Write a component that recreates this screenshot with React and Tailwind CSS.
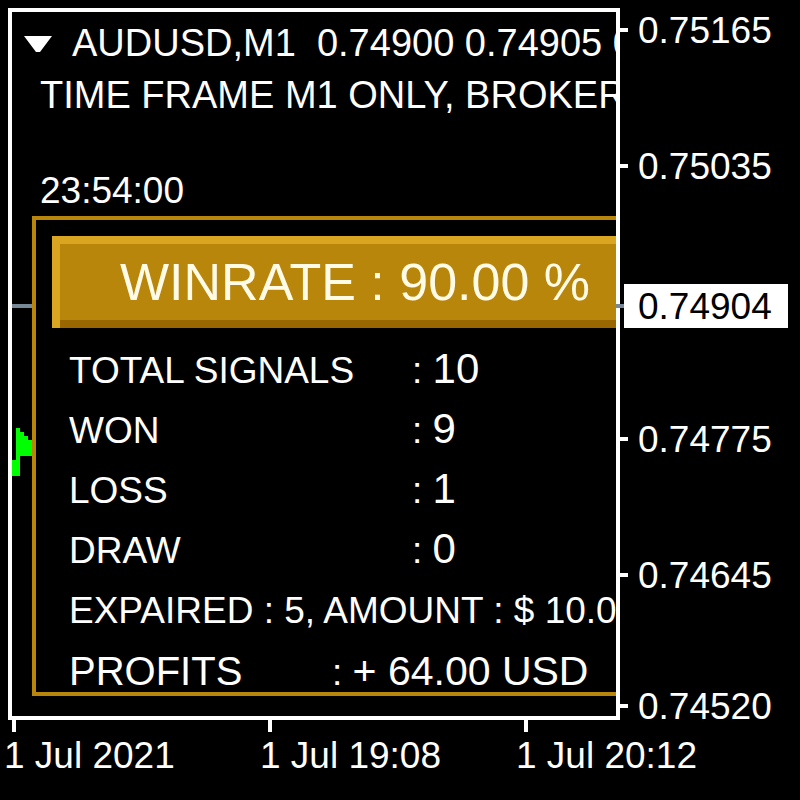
import React from "react";

// price scale: maps a price to its y (px) on the right axis
const TOP_PRICE = 0.75165;
const PX_PER_UNIT = 676 / 0.00645;
const priceY = (p) => 22 + (TOP_PRICE - p) * PX_PER_UNIT;

const priceLabels = ["0.75165", "0.75035", "0.74775", "0.74645", "0.74520"];
const timeLabels = ["1 Jul 2021", "1 Jul 19:08", "1 Jul 20:12"];

function Row({ label, value }) {
  return (
    <div className="h-[60px] leading-[60px] text-[37px] whitespace-nowrap pl-[33px]">
      <span className="inline-block w-[343px]">{label}</span>
      <span>{": "}</span>
      <span className="text-[42px] leading-none">{value}</span>
    </div>
  );
}

export default function App() {
  const cur = 0.74904;
  const curY = Math.round(priceY(cur)) + 2;
  return (
    <div className="w-[800px] h-[800px] bg-black text-white overflow-hidden font-['Liberation_Sans',Arial,sans-serif]">
      <div className="flex pt-[8px] pl-[8px]">
        {/* chart */}
        <div className="relative w-[612px] h-[712px] border-4 border-white overflow-hidden shrink-0">
          <div className="absolute left-0 right-0 h-[4px] bg-[#778899]" style={{ top: curY - 6 }} />
          <svg className="absolute left-0 top-[416px]" width="20" height="48" viewBox="0 0 20 48">
            <polygon
              fill="#00ff00"
              points="4,0 8,0 8,4 12,4 12,8 16,8 16,12 20,12 20,28 8,28 8,48 0,48 0,32 4,32"
            />
          </svg>

          <div className="flex h-[62px] items-start whitespace-nowrap">
            <svg className="mt-[24px] ml-[12px] shrink-0" width="28" height="16" viewBox="0 0 28 16">
              <polygon fill="#ffffff" points="0,0 28,0 16,16 12,16" />
            </svg>
            <span className="ml-[20px] text-[38px] leading-[62px] whitespace-pre">
              {"AUDUSD,M1  0.74900 0.74905 0"}
            </span>
          </div>
          <div className="h-[42px] leading-[42px] text-[38px] pl-[28px] whitespace-nowrap">
            TIME FRAME M1 ONLY, BROKER
          </div>
          <div className="mt-[54px] h-[42px] leading-[42px] text-[37px] pl-[28px] whitespace-nowrap">
            23:54:00
          </div>

          {/* statistics panel */}
          <div className="relative ml-[20px] mt-[4px] w-[700px] h-[480px] border-4 border-[#b8860b] bg-black pt-[16px]">
            <div className="ml-[16px] bg-[#daa520] pt-[8px] pl-[8px]">
              <div className="h-[84px] bg-[#b8860b] border-b-8 border-[#996600] flex items-center pl-[60px] text-[52px] leading-none text-[#fffbe6] whitespace-nowrap">
                WINRATE : 90.00 %
              </div>
            </div>
            <div className="mt-[13px]">
              <Row label="TOTAL SIGNALS" value="10" />
              <Row label="WON" value="9" />
              <Row label="LOSS" value="1" />
              <Row label="DRAW" value="0" />
              <div className="h-[60px] leading-[60px] text-[37px] whitespace-nowrap pl-[33px]">
                EXPAIRED : 5, AMOUNT : $ 10.0
              </div>
              <div className="h-[60px] leading-[60px] text-[37px] whitespace-nowrap pl-[33px]">
                <span className="inline-block w-[263px] text-[40px]">PROFITS</span>
                <span>{": "}</span>
                <span className="text-[41px] leading-none">+ 64.00 USD</span>
              </div>
            </div>
          </div>
        </div>

        {/* price axis (labels placed by their price) */}
        <div className="relative w-[180px] h-[712px]">
          {priceLabels.map((t) => {
            const c = Math.round(priceY(parseFloat(t)));
            return (
              <div
                key={t}
                className="absolute left-0 flex items-center gap-[10px] h-[36px]"
                style={{ top: c - 18 }}
              >
                <div className="w-[8px] h-[4px] bg-white" />
                <div className="text-[37px] leading-none whitespace-nowrap">{t}</div>
              </div>
            );
          })}
          <div
            className="absolute left-[-4px] flex items-center h-[44px]"
            style={{ top: curY - 22 }}
          >
            <div className="w-[8px] h-[4px] bg-[#778899]" />
            <div className="w-[164px] h-[44px] bg-white text-black flex items-center pl-[14px] text-[37px] leading-none">
              {cur.toFixed(5)}
            </div>
          </div>
        </div>
      </div>

      {/* time axis */}
      <div className="flex pl-[4px]">
        {timeLabels.map((t) => (
          <div key={t} className="w-[256px] flex flex-col">
            <div className="ml-[8px] w-[4px] h-[12px] bg-white" />
            <div className="mt-[5px] text-[37px] leading-none whitespace-nowrap">{t}</div>
          </div>
        ))}
      </div>
    </div>
  );
}
